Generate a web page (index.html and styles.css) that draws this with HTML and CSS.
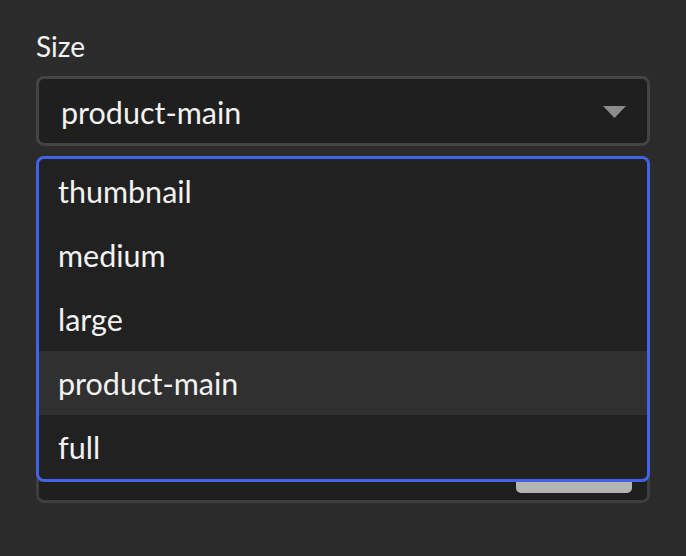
FILE: index.html
```html
<!DOCTYPE html>
<html>
<head>
<meta charset="utf-8">
<link rel="stylesheet" href="styles.css">
</head>
<body>
<div class="panel">
  <div class="label">Size</div>
  <div class="select">
    <span class="value">product-main</span>
    <svg class="arrow" width="23" height="12" viewBox="0 0 23 12"><polygon points="0,0 23,0 11.5,12" fill="#8c8c8c"/></svg>
  </div>
  <div class="field2">
    <div class="btn"></div>
  </div>
  <ul class="menu">
    <li>thumbnail</li>
    <li>medium</li>
    <li>large</li>
    <li class="active">product-main</li>
    <li>full</li>
  </ul>
</div>
</body>
</html>
```
FILE: styles.css
```css
html, body { margin: 0; padding: 0; }
body {
  width: 686px;
  height: 556px;
  background: #2b2b2b;
  font-family: "Lato", "Noto Sans", sans-serif;
  color: #f2f2f2;
  overflow: hidden;
}
.panel {
  position: relative;
  padding: 28px 36px 0 36px;
}
.label {
  font-size: 28px;
  line-height: 36px;
  height: 36px;
  margin-bottom: 12px;
}
.select {
  box-sizing: border-box;
  height: 70px;
  border: 3px solid #444444;
  border-radius: 8px;
  background: #1f1f1f;
  display: flex;
  align-items: center;
  justify-content: space-between;
  padding: 0 21px 0 22px;
}
.value {
  font-size: 30.5px;
  line-height: 40px;
  margin-top: 2px;
}
.arrow { display: block; margin-top: 2px; }
.field2 {
  box-sizing: border-box;
  margin-top: 266px;
  height: 91px;
  border: 3px solid #3e3e3e;
  border-radius: 8px;
  background: #1f1f1f;
  display: flex;
  justify-content: flex-end;
  align-items: flex-end;
  padding: 0 15px 7px 0;
}
.btn {
  width: 116px;
  height: 40px;
  background: #b4b4b4;
  border-radius: 5px;
}
.menu {
  position: absolute;
  top: 156px;
  left: 36px;
  width: 614px;
  box-sizing: border-box;
  margin: 0;
  padding: 0;
  list-style: none;
  border: 3px solid #4262ea;
  border-radius: 8px;
  background: #212121;
  overflow: hidden;
}
.menu li {
  height: 64px;
  line-height: 64px;
  padding-left: 19px;
  font-size: 30.5px;
}
.menu li.active { background: #303030; }
```
